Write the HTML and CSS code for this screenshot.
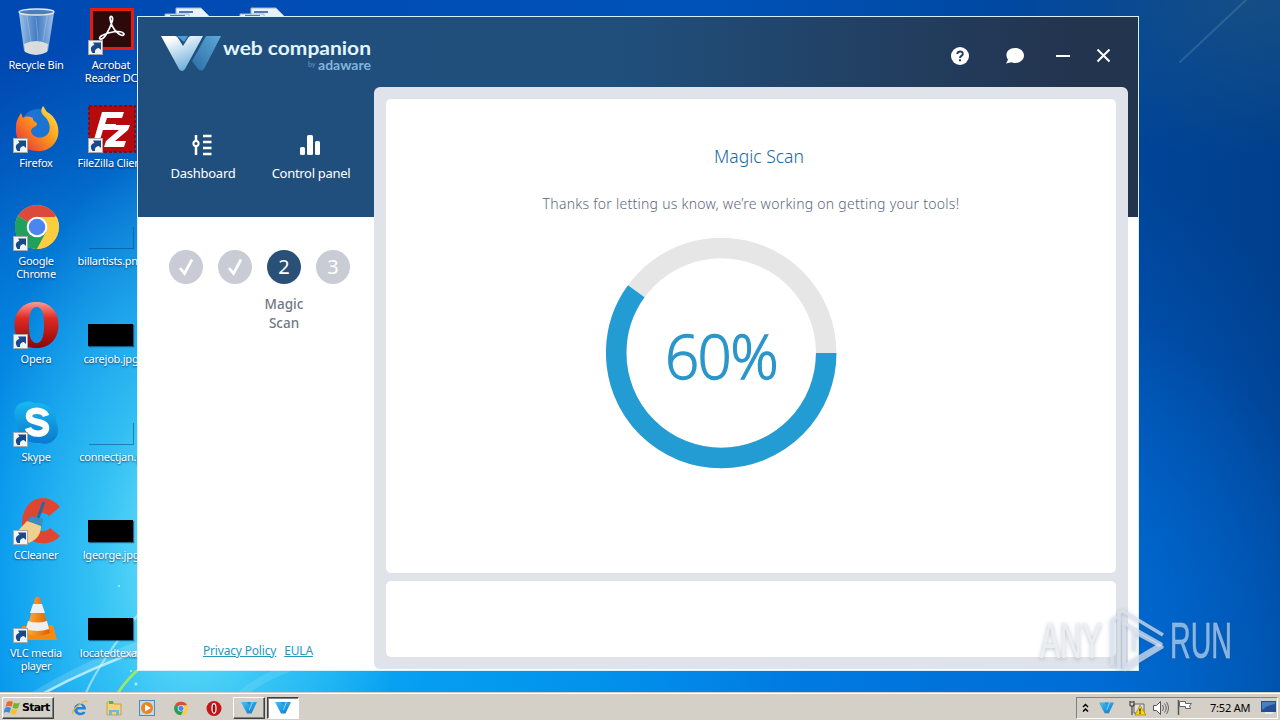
FILE: index.html
```html
<!DOCTYPE html>
<html lang="en">
<head>
<meta charset="utf-8">
<title>Web Companion</title>
<link rel="stylesheet" href="styles.css">
</head>
<body>
<svg class="defs" width="0" height="0" aria-hidden="true">
  <defs>
    <linearGradient id="wl" x1="0" y1="0" x2=".5" y2="1"><stop offset=".15" stop-color="#fff"/><stop offset="1" stop-color="#6eafd9"/></linearGradient>
    <linearGradient id="wr" x1="1" y1="0" x2="0" y2="1"><stop offset="0" stop-color="#5aa9d6"/><stop offset="1" stop-color="#2d6da5"/></linearGradient>
    <linearGradient id="ff" x1="1" y1="0" x2="0" y2="1"><stop offset="0" stop-color="#fff04a"/><stop offset=".45" stop-color="#ff9a1c"/><stop offset="1" stop-color="#e8223c"/></linearGradient>
    <linearGradient id="op" x1="0" y1="0" x2="0" y2="1"><stop offset="0" stop-color="#ff9c92"/><stop offset=".35" stop-color="#e02a24"/><stop offset="1" stop-color="#8c0508"/></linearGradient>
    <linearGradient id="sk" x1="0" y1="0" x2="0" y2="1"><stop offset="0" stop-color="#18b8f0"/><stop offset="1" stop-color="#0a78cf"/></linearGradient>
    <linearGradient id="cn" x1="0" y1="0" x2="1" y2="0"><stop offset="0" stop-color="#ffae3a"/><stop offset="1" stop-color="#dd5f00"/></linearGradient>
    <linearGradient id="bin" x1="0" y1="0" x2="1" y2="0"><stop offset="0" stop-color="#c0daf0" stop-opacity=".85"/><stop offset=".5" stop-color="#5f92cc" stop-opacity=".7"/><stop offset="1" stop-color="#bcd6ef" stop-opacity=".85"/></linearGradient>
    <linearGradient id="tw" x1="0" y1="0" x2="1" y2="1"><stop offset="0" stop-color="#46c0f8"/><stop offset="1" stop-color="#0877c8"/></linearGradient>
    <symbol id="shortcut" viewBox="0 0 15 15"><rect x=".5" y=".5" width="14" height="14" fill="#f2f5f8" stroke="#a8a8a8"/><path d="M4.500 13C1.500 9 3 5.500 6.500 5L5 2.500h8V10L10.800 8C8 8.500 6.500 10 7 13z" fill="#174a8c"/></symbol>
    <symbol id="chrome" viewBox="0 0 44 44"><circle cx="22" cy="22" r="22" fill="#fccd3f"/><path d="M22 22L3 11A22 22 0 0 1 41 11z" fill="#dc4a3c"/><path d="M22 22L2.900 11A22 22 0 0 0 22 44L31.500 27z" fill="#1fa05c"/><path d="M22 12H41.500A22 22 0 0 1 22 44L31 27z" fill="#fccd3f"/><circle cx="22" cy="22" r="10.300" fill="#fff"/><circle cx="22" cy="22" r="8.300" fill="#4c84f0"/></symbol>
    <symbol id="opera" viewBox="0 0 44 46"><path d="M22 0C8 0 0 10 0 23s8 23 22 23 22-10 22-23S36 0 22 0zm0 5c6 0 7.500 8 7.500 18S28 41 22 41s-7.500-8-7.500-18S16 5 22 5z" fill="url(#op)" fill-rule="evenodd"/></symbol>
    <symbol id="wtask" viewBox="0 0 16 12"><path d="M0 0h16L10.500 11.500H6z" fill="url(#tw)"/><path d="M11.500 0L8.300 8" stroke="#8fd4f7" stroke-width="1"/><path d="M6 0h3.500L8 3z" fill="#1a8fdc"/></symbol>
  </defs>
</svg>
<div class="desktop">
  <svg class="wallpaper" viewBox="0 0 1280 720" aria-hidden="true">
    <g fill="none" stroke="#dffbff" stroke-linecap="round">
      <path d="M20 705Q90 660 170 635" stroke-width="9" opacity=".18"/>
      <path d="M44 693Q90 668 145 649" stroke-width="2.500" opacity=".7"/>
      <path d="M86 693Q100 660 142 610" stroke-width="2" opacity=".55"/>
      <path d="M118 693Q126 680 142 666" stroke="#a8f04c" stroke-width="2.500" opacity=".9"/>
      <path d="M1180 62L1246 0" stroke-width="2" opacity=".13"/>
      <path d="M240 696Q262 676 300 664" stroke-width="8" opacity=".12"/>
    </g>
    <g fill="#e8fcff" opacity=".7"><circle cx="119" cy="586" r="1"/><circle cx="136" cy="684" r="1.500"/><circle cx="131" cy="671" r="1"/></g>
  </svg>

  <div class="icons">
    <div class="item"><svg class="pic" viewBox="0 0 48 48"><path d="M7 4L12 42q12 7 24 0L42 4z" fill="url(#bin)" transform="translate(0 1)"/><path d="M12 36q12-6 24 0l-1 8q-11 6-22 0z" fill="#e9e5dc" opacity=".9"/><path d="M15 8l4 26M24 9l2 24M35 8l-4 25" stroke="#d7e9f8" opacity=".3"/><ellipse cx="24.500" cy="4" rx="17.500" ry="3" fill="#4d7fb8" stroke="#e2eaf2" stroke-width="1.300"/></svg><span>Recycle Bin</span></div>
    <div class="item"><svg class="pic" viewBox="0 0 48 48"><rect x="4.500" y="1.500" width="41" height="39" fill="#2c0a0c" stroke="#e51c12" stroke-width="3"/><path d="M13 31C9 27 34 20 37 26C36 31 24 22 23 10C23 7 27 8 25 14S17 33 13 31z" fill="none" stroke="#fff" stroke-width="1.700"/><use href="#shortcut" x="1" y="32" width="15" height="15"/></svg><span>Acrobat<br>Reader DC</span></div>
    <div class="item"><svg class="pic" viewBox="0 0 48 48"><path d="M14 0h25l8 8v38H14zM3 6h24v39H3z" fill="#e8f1fa" stroke="#9cb6d2"/><path d="M8 8h15M8 12h15M17 4h14" stroke="#4a7ab0" stroke-width="2"/></svg></div>
    <div class="item"><svg class="pic" viewBox="0 0 48 48"><path d="M14 0h25l8 8v38H14zM3 6h24v39H3z" fill="#e8f1fa" stroke="#9cb6d2"/><path d="M8 8h15M8 12h15M17 4h14" stroke="#4a7ab0" stroke-width="2"/></svg></div>

    <div class="item"><svg class="pic" viewBox="0 0 48 48"><circle cx="26" cy="20" r="17" fill="#1b74d4"/><path d="M31 0c2 2 2 4 4 6 8 4 13 14 11 24-3 11-12 16-22 15C10 44 3 34 4 21c0-6 2-9 5-14l2 5c4-3 8-1 10 0-1 3 4 4 4 6 0 3-6 3-6 7 1 8 14 9 18 1 2-5 0-12-5-16-4-4-3-7-1-10z" fill="url(#ff)"/><use href="#shortcut" x="1" y="32" width="15" height="15"/></svg><span>Firefox</span></div>
    <div class="item"><svg class="pic" viewBox="0 0 48 48"><rect x="2" y="0" width="46" height="46" fill="#b60b0d" stroke="#8f0709" stroke-width="2" stroke-dasharray="3 2"/><path d="M15 6h22l-2 6H20l-2 6h11l-2 6H16l-4 13H6zM25 19h18l-2 5-13 11h11l-2 6H17l2-6 13-11h-9z" fill="#fff"/><use href="#shortcut" x="1" y="32" width="15" height="15"/></svg><span>FileZilla Client</span></div>
    <div></div><div></div>

    <div class="item"><svg class="pic" viewBox="0 0 48 48"><use href="#chrome" x="3" y="1" width="44" height="44"/><use href="#shortcut" x="1" y="32" width="15" height="15"/></svg><span>Google<br>Chrome</span></div>
    <div class="item"><div class="pic thumb clear"></div><span>billartists.png</span></div>
    <div></div><div></div>

    <div class="item"><svg class="pic" viewBox="0 0 48 48"><use href="#opera" x="2" y="0" width="45" height="46"/><use href="#shortcut" x="1" y="32" width="15" height="15"/></svg><span>Opera</span></div>
    <div class="item"><div class="pic thumb"></div><span>carejob.jpg</span></div>
    <div></div><div></div>

    <div class="item"><svg class="pic" viewBox="0 0 48 48"><path d="M13 2c4-1 8 0 10 1 13-1 22 9 21 19 7 13-4 25-16 21C14 44 5 36 5 22-1 10 5 3 13 2z" fill="url(#sk)"/><path d="M34 16c-2-7-17-7-17 0 0 8 17 4 17 12 0 8-16 7-18 0" fill="none" stroke="#fff" stroke-width="6.500"/><use href="#shortcut" x="1" y="32" width="15" height="15"/></svg><span>Skype</span></div>
    <div class="item"><div class="pic thumb clear"></div><span>connectjan.p</span></div>
    <div></div><div></div>

    <div class="item"><svg class="pic" viewBox="0 0 48 48"><path d="M48 9l-11 9c-7-7-15-2-14 7 1 8 9 11 15 5l10 8C38 50 12 48 10 27 9 2 33-9 48 9z" fill="#e0462f"/><path d="M32 4L26 20" stroke="#236b9f" stroke-width="3"/><path d="M18 18l13 3-1 8-15-3z" fill="#3a8dc0"/><path d="M15 23l14 5c0 9-5 14-12 17L4 35z" fill="#f2cf8f"/><use href="#shortcut" x="1" y="32" width="15" height="15"/></svg><span>CCleaner</span></div>
    <div class="item"><div class="pic thumb"></div><span>lgeorge.jpg</span></div>
    <div></div><div></div>

    <div class="item"><svg class="pic" viewBox="0 0 48 48"><path d="M10 30l31-1 4 15H9z" fill="#f28a16"/><path d="M23 2q3-3 5 0l10 35q-12 6-24 0z" fill="url(#cn)"/><path d="M21 8h9l3 9H18zM16 25q9 3 19 0l2 8q-12 4-23 0z" fill="#eef0f1"/><use href="#shortcut" x="1" y="32" width="15" height="15"/></svg><span>VLC media<br>player</span></div>
    <div class="item"><div class="pic thumb"></div><span>locatedtexa.j</span></div>
  </div>

  <main class="window">
    <header class="titlebar">
      <svg class="logo" viewBox="0 0 214 40" role="img" aria-label="web companion by adaware">
        <path d="M46 2H61L44 35q-3 3-6 0L32 27z" fill="url(#wr)"/>
        <path d="M17 2h11l-4 6z" fill="#4a9bdc"/>
        <path d="M1 2h14q2 0 3 2l5 8 5-8q1-2 3-2h12L25 35q-3 4-6 0z" fill="url(#wl)"/>
        <text x="63" y="20.500" class="brand" textLength="148" lengthAdjust="spacingAndGlyphs">web companion</text>
        <text x="148" y="33" class="by">by</text>
        <text x="158" y="36" class="sub" textLength="53" lengthAdjust="spacingAndGlyphs">adaware</text>
      </svg>
      <nav class="controls">
        <svg width="18" height="18" viewBox="0 0 18 18"><circle cx="9" cy="9" r="9" fill="#fff"/><path d="M6.300 7c0-3.400 5.600-3.400 5.500 0 0 2-2.800 1.700-2.800 3.900M9 12.200v2" fill="none" stroke="#233b5c" stroke-width="1.900"/></svg>
        <svg width="18" height="16" viewBox="0 0 18 16"><path d="M9 0c5 0 9 3.200 9 7.500S14 15 9 15c-1.500 0-2.500-.2-3.800-.8L0 15.500l2-3.800C-2 6 2 0 9 0z" fill="#fff"/></svg>
        <svg width="14" height="14" viewBox="0 0 14 14"><path d="M0 7h14" stroke="#fff" stroke-width="2"/></svg>
        <svg width="14" height="14" viewBox="0 0 14 14"><path d="M1.500 .5l12 12M13.500 .5l-12 12" stroke="#fff" stroke-width="2"/></svg>
      </nav>
    </header>
    <div class="body">
      <aside class="side">
        <nav class="tabs">
          <a class="tab"><svg width="20" height="22" viewBox="0 0 20 22"><path d="M4 1v20" stroke="#fff" stroke-width="2.500"/><circle cx="4" cy="9.500" r="2.600" fill="#204f7c" stroke="#fff" stroke-width="2"/><path d="M11 2h8.500M11 8h8.500M11 14h8.500M11 20h8.500" stroke="#fff" stroke-width="2.300"/></svg><span class="dash">Dashboard</span></a>
          <a class="tab"><svg width="20" height="22" viewBox="0 0 20 22"><g fill="#fff"><rect y="13" width="5" height="8" rx="1.500"/><rect x="7" y="1" width="6" height="20" rx="1.500"/><rect x="15" y="7" width="5" height="14" rx="1.500"/></g></svg><span class="panel-label">Control panel</span></a>
        </nav>
        <ol class="steps">
          <li><svg viewBox="0 0 34 34"><path d="M11 18l4.500 5.500L23 9.500" fill="none" stroke="#fff" stroke-width="2.700"/></svg></li>
          <li><svg viewBox="0 0 34 34"><path d="M11 18l4.500 5.500L23 9.500" fill="none" stroke="#fff" stroke-width="2.700"/></svg></li>
          <li class="current">2</li>
          <li>3</li>
        </ol>
        <p class="step-name">Magic<br>Scan</p>
        <p class="links"><a>Privacy Policy</a><a>EULA</a></p>
      </aside>
      <section class="content">
        <div class="card scan">
          <h1>Magic Scan</h1>
          <p class="message">Thanks for letting us know, we’re working on getting your tools!</p>
          <div class="ring">
            <svg width="231" height="231" viewBox="0 0 231 231"><g fill="none" stroke-width="20.500" transform="translate(115.200 115)"><circle r="105" stroke="#e6e6e6"/><circle r="105" stroke="#239cd3" pathLength="100" stroke-dasharray="60 40"/></g></svg>
            <strong>60%</strong>
          </div>
        </div>
        <div class="card footer-card"></div>
      </section>
    </div>
  </main>

  <svg class="watermark" viewBox="0 0 210 70" role="img" aria-label="ANY RUN">
    <g class="mark-text">
      <text x="10" y="49" textLength="62" lengthAdjust="spacingAndGlyphs" class="any">ANY</text>
      <text x="140" y="49" textLength="62" lengthAdjust="spacingAndGlyphs" class="run">RUN</text>
    </g>
    <g class="mark-logo" fill="none" stroke-width="3.500" stroke-linejoin="round"><path d="M82 56V11l5-3M89 60V4L93 2 133 26M94 59V14L131 35 94 57"/><path d="M104 42V23l28 15L94 61"/></g>
  </svg>

  <footer class="taskbar">
    <button class="start"><svg width="17" height="17" viewBox="0 0 17 17"><path d="M3 3q3-2 6 0L7.500 8Q5 6 1.500 8z" fill="#ee6a25"/><path d="M10 3.500q3 2 6 0L14 9q-3 1.500-5.500-.5z" fill="#72b435"/><path d="M1 9q3-2 6 0l-1.500 5Q3 12-.5 14z" fill="#3c8be0"/><path d="M8 9.500q3 2 5.500.5L12 15q-3 1.500-5.500-.5z" fill="#f5c228"/></svg>Start</button>
    <div class="quick">
      <svg viewBox="0 0 16 16"><path d="M14 9.500H5.500c0 4 4 4 5.500 2l2.500 1C11 17 2 16 2 9S14 1 14 9.500zM5.500 7h5C10 4 6 4 5.500 7z" fill="#2583dc" fill-rule="evenodd"/><path d="M1 14Q-1 11 7 5T15 2" fill="none" stroke="#e9b73b" stroke-width="1.300"/></svg>
      <svg viewBox="0 0 16 16"><path d="M1 2h6l1 2h7v11H1z" fill="#f0d675" stroke="#c1a34c"/><path d="M3 1h4v3H3z" fill="#62ad4c"/><path d="M3 15v-5h10v5h-3v-3H6v3z" fill="#6eb8e9"/></svg>
      <svg viewBox="0 0 16 16"><rect x=".5" y=".5" width="15" height="15" fill="#bcdcf2" stroke="#4e8cbc"/><circle cx="8" cy="8" r="6" fill="#ee8419"/><path d="M6 4.500l6 3.500-6 3.500z" fill="#fff"/></svg>
      <svg viewBox="0 0 44 44"><use href="#chrome" x="3" y="4" width="38" height="38"/></svg>
      <svg viewBox="0 0 16 16"><circle cx="8" cy="8.500" r="7.500" fill="#c2161b"/><ellipse cx="8" cy="8.500" rx="2" ry="4.800" fill="#941014" stroke="#fff" stroke-width="1.200"/></svg>
    </div>
    <div class="task"><svg width="16" height="12"><use href="#wtask" width="16" height="12"/></svg></div>
    <div class="task active"><svg width="16" height="12"><use href="#wtask" width="16" height="12"/></svg></div>
    <div class="tray">
      <svg width="7" height="10" viewBox="0 0 7 10"><path d="M1 4l2.500-2.500L6 4M1 8.500L3.500 6 6 8.500" fill="none" stroke="#000" stroke-width="1.500"/></svg>
      <svg class="t-web" width="15" height="12"><use href="#wtask" width="15" height="12"/></svg>
      <svg class="t-net" width="17" height="16" viewBox="0 0 17 16"><path d="M5 4h10v9H5z" fill="#e2e2e2" stroke="#666"/><path d="M1 1v5h4V1M3 6v9M1 2h4" fill="none" stroke="#333"/><path d="M11 5l6 10H6z" fill="#f6d51a" stroke="#9a8200" stroke-width=".7"/><path d="M11 8.500v3M11 12.500v1.200" stroke="#000" stroke-width="1.200"/></svg>
      <svg class="t-vol" width="16" height="14" viewBox="0 0 16 14"><path d="M.5 4.500h3l4-4v13l-4-4h-3z" fill="#fff" stroke="#555"/><path d="M9.500 4q2 3 0 6M11.500 2.500q3.500 4.500 0 9M13.500 1q4 6 0 12" fill="none" stroke="#666"/></svg>
      <svg class="t-flag" width="16" height="15" viewBox="0 0 16 15"><path d="M1.500 0v15" stroke="#555" stroke-width="1.500"/><path d="M2.500 1.500h6v2h6l-2 2.500 1 2.500h-5v-2h-6z" fill="#fff" stroke="#666"/></svg>
      <time>7:52 AM</time>
      <svg class="t-show" width="15" height="13" viewBox="0 0 15 13"><rect width="15" height="11" fill="#244f94"/><path d="M1 1h13v2Q7 4 1 9z" fill="#477fc5"/><path d="M4 12h8" stroke="#eef5ff" stroke-width="1.500"/></svg>
    </div>
  </footer>
</div>
</body>
</html>
```
FILE: styles.css
```css
* { box-sizing: border-box; }
body { margin: 0; overflow: hidden; font-family: "Noto Sans", "Open Sans", sans-serif; }
p, h1, ol { margin: 0; padding: 0; }
.defs { position: absolute; }
.desktop {
  position: relative; width: 1280px; height: 720px; overflow: hidden;
  display: flex; flex-direction: column; justify-content: flex-end;
  background:
    radial-gradient(ellipse 210px 420px at 190px 560px, rgba(130,238,250,.85), rgba(90,222,248,.5) 45%, rgba(20,170,240,0) 100%),
    radial-gradient(ellipse 560px 560px at 230px 580px, rgba(30,190,245,.9) 0%, rgba(6,160,242,.8) 40%, rgba(0,120,226,0) 100%),
    radial-gradient(ellipse 1000px 560px at 400px 690px, #0092ee 0%, rgba(0,126,230,.85) 45%, rgba(0,84,196,0) 100%),
    radial-gradient(ellipse 340px 480px at 1060px 640px, rgba(0,102,216,.8), rgba(0,84,190,0) 100%),
    radial-gradient(ellipse 240px 160px at 1250px 0, rgba(30,84,130,.7), rgba(10,70,130,0) 100%),
    linear-gradient(90deg, #0049b2 0%, #0052b8 55%, #004599 88%, #003f8c 100%);
}
.wallpaper { position: absolute; inset: 0; width: 1280px; height: 720px; }

.icons {
  position: absolute; left: 0; top: 8px; display: grid;
  grid-template-columns: repeat(4, 72px); column-gap: 3px; grid-auto-rows: 98px;
}
.item { display: flex; flex-direction: column; align-items: center; overflow: visible; }
.item .pic { width: 48px; height: 48px; flex: none; overflow: visible; }
.item span {
  margin-top: 2px; font-size: 11px; line-height: 13px; letter-spacing: -.25px; color: #fff;
  text-align: center; white-space: nowrap; text-shadow: 0 1px 2px rgba(0,30,80,.75);
}
.item .thumb { width: 45px; height: 22px; margin: 22px 1px 4px 0; background: #000; box-shadow: 1px 1px 1px rgba(0,40,80,.6); }
.item .clear { background: transparent; box-shadow: 1px 1px 0 rgba(0,65,110,.5); }

.window {
  position: absolute; left: 137px; top: 16px; width: 1002px; height: 655px;
  display: flex; flex-direction: column; border: 1px solid #d9f0fb;
  background: linear-gradient(90deg, #204f7d 0%, #204f7c 48%, #23344f 93%, #23344f 100%) 0 0 / 100% 200px no-repeat #fff;
}
.titlebar { height: 70px; display: flex; justify-content: space-between; padding: 17px 28px 0 22px; }
.logo { width: 214px; height: 40px; }
.brand { font: 700 19px "Lato", sans-serif; fill: #e2f6ff; }
.by { font: 700 7px "Lato", sans-serif; fill: #5587b5; }
.sub { font: 700 12.5px "Lato", sans-serif; fill: #81b5dc; }
.controls { height: 44px; display: flex; align-items: center; }
.controls svg:nth-child(2) { margin-left: 37px; }
.controls svg:nth-child(3) { margin-left: 32px; }
.controls svg:nth-child(4) { margin-left: 26px; }
.body { flex: 1; display: flex; padding: 0 10px 1px 0; }
.side { width: 236px; display: flex; flex-direction: column; }
.tabs { height: 130px; display: flex; padding: 47px 0 0 11px; }
.tab { width: 108px; display: flex; flex-direction: column; align-items: center; color: #fff; font-size: 13px; line-height: 18px; white-space: nowrap; }
.tab svg { margin-bottom: 8px; margin-right: 2px; }
.dash { letter-spacing: -.25px; }
.panel-label { letter-spacing: -.3px; }
.steps { display: flex; gap: 15px; padding: 33px 0 0 31px; list-style: none; }
.steps li { width: 34px; height: 34px; border-radius: 50%; background: #c9ccd5; color: #fff; font-size: 20px; line-height: 34px; text-align: center; }
.steps svg { display: block; width: 34px; height: 34px; }
.steps .current { background: #2a5078; }
.step-name { width: 80px; margin: 11px 0 0 106px; font-size: 13.5px; font-weight: 500; line-height: 19px; text-align: center; color: #707884; }
.links { display: flex; gap: 8px; margin-top: auto; padding: 0 0 10px 65px; font-size: 12px; line-height: 17px; letter-spacing: -.18px; color: #2598ba; text-decoration: underline; white-space: nowrap; }
.content { flex: 1; display: flex; flex-direction: column; gap: 8px; padding: 12px; background: #e0e3e9; border-radius: 6px; }
.card { background: #fff; border-radius: 5px; }
.scan { height: 474px; display: flex; flex-direction: column; align-items: center; padding-top: 45px; }
.footer-card { flex: 1; }
h1 { font-size: 17.5px; line-height: 24px; font-weight: 300; color: #20669a; padding-left: 16px; }
.message { margin-top: 25px; font-size: 14px; line-height: 22px; font-weight: 300; letter-spacing: .26px; color: #5d687c; white-space: nowrap; }
.ring { width: 231px; margin: 23px 60px 0 0; display: grid; place-items: center; }
.ring > * { grid-area: 1 / 1; }
.ring strong { font: 300 60px/70px "Open Sans", sans-serif; letter-spacing: -1.600px; color: #2b96ca; -webkit-text-stroke: 1.300px #2b96ca; padding-top: 4px; }

.watermark { position: absolute; left: 1030px; top: 609px; width: 210px; height: 70px; overflow: visible; filter: drop-shadow(0 1px 2px rgba(60,80,110,.4)); }
.mark-text text { font: 400 50px "Liberation Sans", sans-serif; stroke-width: 1px; }
.any { fill: rgba(238,239,243,.9); }
.run { fill: rgba(165,202,240,.8); stroke: rgba(165,202,240,.5); }
.mark-logo { stroke: rgba(220,230,242,.72); }

.taskbar { position: relative; height: 28px; display: flex; align-items: center; background: #d4d0c8; border-top: 1px solid #d4d0c8; box-shadow: inset 0 1px #fff; padding: 2px 2px 0; }
.start, .task { height: 22px; border: 1px solid; border-color: #fff #404040 #404040 #fff; box-shadow: inset -1px -1px #808080; background: #d4d0c8; }
.start { width: 52px; display: flex; align-items: center; gap: 1px; padding: 0 1px; font: 700 11px "DejaVu Sans", sans-serif; letter-spacing: -.75px; color: #000; }
.start svg { flex: none; }
.quick { display: flex; gap: 17.600px; margin: 0 11px 0 18px; }
.quick svg { width: 16px; height: 16px; }
.task { width: 32px; display: grid; place-items: center; margin-right: 2px; }
.active { border-color: #404040 #fff #fff #404040; box-shadow: inset 1px 1px #808080; background: #fff; }
.tray { width: 202px; height: 22px; margin-left: auto; display: flex; align-items: center; padding-left: 5px; border: 1px solid; border-color: #808080 #fff #fff #808080; }
.t-web { margin-left: 10px; }
.t-net { margin-left: 15px; }
.t-vol { margin-left: 7px; }
.t-flag { margin-left: 8px; }
time { width: 42px; margin-left: 17px; font: 11px "Noto Sans", sans-serif; letter-spacing: -.2px; white-space: nowrap; }
.t-show { margin-left: 9px; }
```
